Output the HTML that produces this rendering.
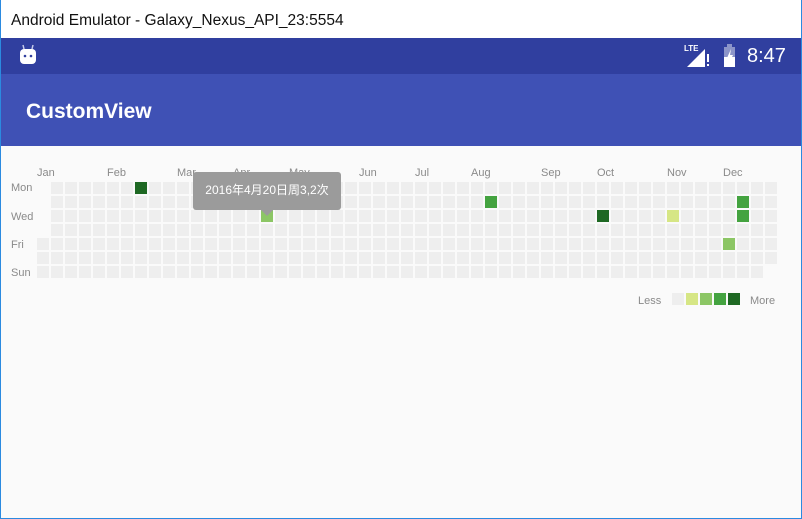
<!DOCTYPE html>
<html><head><meta charset="utf-8"><style>
*{margin:0;padding:0;box-sizing:border-box}
body{width:802px;height:519px;overflow:hidden;background:#fafafa;font-family:"Liberation Sans","Noto Sans CJK SC",sans-serif;position:relative}
.win{position:absolute;left:0;top:0;width:802px;height:519px;border:1px solid #2b8ae0;border-top:none}
.title{position:absolute;left:0;top:0;width:802px;height:38px;background:#fff;font-size:15.5px;color:#111;padding:12px 0 0 11px}
.sb{position:absolute;left:1px;top:38px;width:800px;height:36px;background:#303f9f}
.ab{position:absolute;left:1px;top:74px;width:800px;height:72px;background:#3f51b5}
.ab span{position:absolute;left:25px;top:26px;color:#fff;font-size:21px;font-weight:bold}
.c{position:absolute;width:12px;height:12px;background:#eee}
.t{position:absolute;font-size:11px;color:#8a8a8a}
.tip{position:absolute;left:193px;top:172px;width:148px;height:38px;background:#9b9b9b;border-radius:3px;color:#fff;font-size:12px;text-align:center;line-height:36px}
.tri{position:absolute;left:261px;top:210px;width:0;height:0;border-left:6px solid transparent;border-right:6px solid transparent;border-top:6px solid #9b9b9b}
</style></head><body>
<div class="title">Android Emulator - Galaxy_Nexus_API_23:5554</div>
<div class="sb">
<svg style="position:absolute;left:17px;top:6px" width="20" height="22" viewBox="0 0 20 22"><line x1="5" y1="1" x2="6" y2="5" stroke="#c5cae9" stroke-width="1.5"/><line x1="15" y1="1" x2="14" y2="5" stroke="#c5cae9" stroke-width="1.5"/><rect x="2" y="5" width="16" height="15" rx="4" fill="#fff"/><circle cx="7" cy="12" r="1.3" fill="#303f9f"/><circle cx="13" cy="12" r="1.3" fill="#303f9f"/></svg>
<div style="position:absolute;left:683px;top:6px;color:#fff;font-size:8px;font-weight:bold">LTE</div>
<svg style="position:absolute;left:686px;top:8px" width="26" height="22"><polygon points="0,21 18,3 18,21" fill="#fff"/><rect x="20" y="8" width="2" height="8" fill="#fff"/><rect x="20" y="18" width="2" height="2" fill="#fff"/></svg>
<svg style="position:absolute;left:722px;top:6px" width="14" height="24"><rect x="4" y="0" width="5" height="3" fill="#8c95c9"/><rect x="1" y="3" width="11" height="20" fill="#8c95c9"/><rect x="1" y="13" width="11" height="10" fill="#fff"/><polygon points="8,5 4,14 7,14 5,21 10,11 7,11" fill="#fff"/></svg>
<div style="position:absolute;left:746px;top:7px;color:#fff;font-size:20px">8:47</div>
</div>
<div class="ab"><span>CustomView</span></div>
<div id="g"></div>
<div class="tip">2016年4月20日周3,2次</div><div class="tri"></div>
<div class="win"></div>
<script>
var g=document.getElementById('g'),h='';
var col={'7,0':'#1e6823','16,2':'#8cc665','32,1':'#44a340','40,2':'#1e6823','45,2':'#d6e685','50,1':'#44a340','50,2':'#44a340','49,4':'#8cc665'};
for(var c=0;c<53;c++)for(var r=0;r<7;r++){
if(c==0&&r<4)continue;if(c==52&&r==6)continue;
var k=col[c+','+r];
h+='<div class="c" style="left:'+(37+14*c)+'px;top:'+(182+14*r)+'px'+(k?';background:'+k:'')+'"></div>';}
var m=[['Jan',37],['Feb',107],['Mar',177],['Apr',233],['May',289],['Jun',359],['Jul',415],['Aug',471],['Sep',541],['Oct',597],['Nov',667],['Dec',723]];
m.forEach(function(a){h+='<div class="t" style="left:'+a[1]+'px;top:167px">'+a[0]+'</div>';});
[['Mon',182],['Wed',211],['Fri',239],['Sun',267]].forEach(function(a){h+='<div class="t" style="left:11px;top:'+a[1]+'px">'+a[0]+'</div>';});
h+='<div class="t" style="left:638px;top:295px">Less</div><div class="t" style="left:750px;top:295px">More</div>';
['#eee','#d6e685','#8cc665','#44a340','#1e6823'].forEach(function(cl,i){h+='<div class="c" style="left:'+(672+14*i)+'px;top:293px;background:'+cl+'"></div>';});
g.innerHTML=h;
</script>
</body></html>
